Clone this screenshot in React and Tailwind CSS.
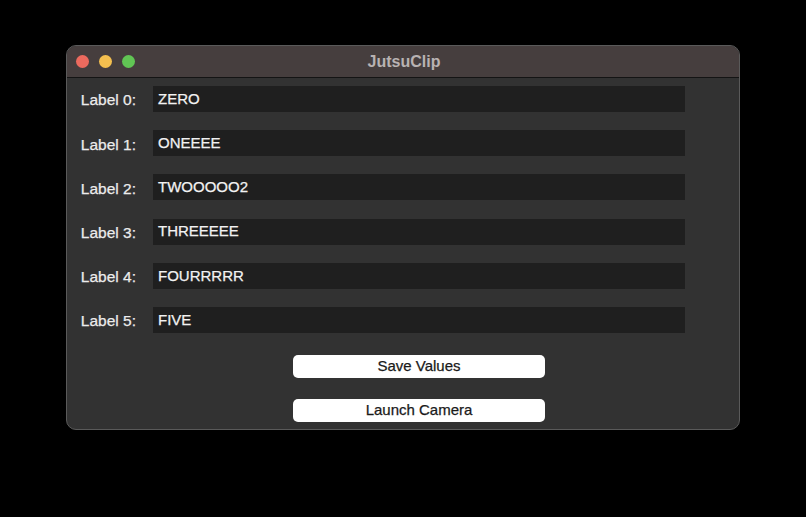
const LABELS = ['ZERO', 'ONEEEE', 'TWOOOOO2', 'THREEEEE', 'FOURRRRR', 'FIVE']

function TrafficLights() {
  return (
    <div className="flex items-center gap-[10px]">
      <span className="h-[13px] w-[13px] rounded-full bg-[#ec6a5e]" />
      <span className="h-[13px] w-[13px] rounded-full bg-[#f4bf4f]" />
      <span className="h-[13px] w-[13px] rounded-full bg-[#61c554]" />
    </div>
  )
}

export default function App() {
  return (
    <div
      className="h-[517px] w-[806px] bg-black pl-[66px] pt-[45px]"
      style={{ fontFamily: '"Liberation Sans", Arial, sans-serif' }}
    >
      <div className="flex h-[385px] w-[674px] flex-col overflow-hidden rounded-[10px] border border-[#5a5a5a] bg-[#323232]">
        <div className="relative flex h-[32px] shrink-0 items-center border-b border-[#141414] bg-[#463e3e] pl-[9px]">
          <TrafficLights />
          <div className="absolute inset-0 flex items-center justify-center pl-[2px] text-[16px] font-bold text-[#b8b2b2]">
            JutsuClip
          </div>
        </div>

        <div className="flex flex-col pt-[8px] [-webkit-text-stroke:0.25px]">
          <div className="flex flex-col gap-[18.2px]">
            {LABELS.map((val, i) => (
              <div key={i} className="flex items-center">
                <div className="flex w-[86px] justify-end pr-[17px] pt-[2px] text-[15.5px] text-[#ececec]">
                  Label {i}:
                </div>
                <div className="flex h-[26px] w-[532px] items-center bg-[#1f1f1f] pl-[5px] text-[15px] text-[#f2f2f2]">
                  {val}
                </div>
              </div>
            ))}
          </div>

          <div className="mt-[22px] flex flex-col gap-[21px] pl-[226px]">
            <button
              type="button"
              className="h-[23px] w-[252px] rounded-[5px] bg-white text-[15px] text-[#1a1a1a]"
            >
              Save Values
            </button>
            <button
              type="button"
              className="h-[23px] w-[252px] rounded-[5px] bg-white text-[15px] text-[#1a1a1a]"
            >
              Launch Camera
            </button>
          </div>
        </div>
      </div>
    </div>
  )
}
